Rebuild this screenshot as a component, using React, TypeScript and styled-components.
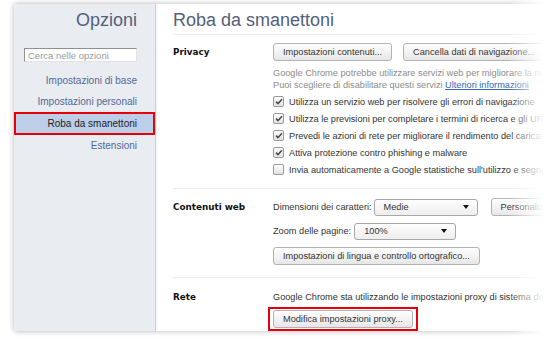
import { FC } from "react";
import styled, { createGlobalStyle } from "styled-components";

const GlobalStyle = createGlobalStyle`
  html, body {
    margin: 0;
    padding: 0;
    background: #fff;
    overflow: hidden;
  }
  body {
    font-family: "Liberation Sans", Arial, sans-serif;
    color: #333;
  }
`;

const Frame = styled.div`
  position: relative;
  width: 550px;
  height: 343px;
  box-sizing: border-box;
  padding: 4px 0 0 14px;
  overflow: hidden;
  background: #fff;

  &::after {
    content: "";
    position: absolute;
    top: 0;
    right: 0;
    bottom: 0;
    width: 42px;
    background: linear-gradient(to right, rgba(255, 255, 255, 0), #fff 85%);
  }
`;

const Window = styled.div`
  display: flex;
  width: 620px;
  height: 327px;
  background: #fff;
  box-shadow: 0 0 6px rgba(0, 0, 0, 0.28);
`;

const Sidebar = styled.nav`
  display: flex;
  flex-direction: column;
  width: 141px;
  flex-shrink: 0;
  padding-top: 6px;
  background: #e9ecf1;
  border-right: 1px solid #cbd0d8;
  box-shadow: 1px 0 2px rgba(0, 0, 0, 0.06);
`;

const PageTitle = styled.h1<{ $side?: boolean }>`
  margin: 0;
  font-size: 18px;
  font-weight: normal;
  line-height: 21px;
  color: #546079;
  text-align: ${({ $side }) => ($side ? "right" : "left")};
  padding: ${({ $side }) => ($side ? "0 18px 0 0" : "0 0 3px 0")};
  border-bottom: ${({ $side }) => ($side ? "none" : "1px solid #eeeeee")};
`;

const Search = styled.input`
  margin: 17px 18px 0 10px;
  height: 14px;
  box-sizing: border-box;
  padding: 0 3px;
  border: 1px solid;
  border-color: #8e8f8f #e2e2e2 #e2e2e2 #8e8f8f;
  background: #fff;
  font-family: inherit;
  font-size: 9.5px;
  outline: none;

  &::placeholder {
    color: #9a9a9a;
  }
`;

const NavList = styled.div`
  display: flex;
  flex-direction: column;
  margin-top: 8px;
`;

const NavItem = styled.a<{ $active?: boolean }>`
  display: block;
  box-sizing: border-box;
  height: ${({ $active }) => ($active ? "23px" : "21px")};
  line-height: ${({ $active }) => ($active ? "19px" : "21px")};
  padding-right: ${({ $active }) => ($active ? "16px" : "18px")};
  text-align: right;
  font-size: 10px;
  text-decoration: none;
  color: ${({ $active }) => ($active ? "#1c1c1c" : "#52699a")};
  background: ${({ $active }) => ($active ? "#bccee8" : "transparent")};
  border: ${({ $active }) => ($active ? "2px solid #e6000c" : "none")};
`;

const Main = styled.main`
  flex: 1;
  display: flex;
  flex-direction: column;
  padding: 6px 0 0 17px;
  font-size: 9.2px;
`;

const Section = styled.section<{ $last?: boolean; $top: number; $bottom: number }>`
  display: grid;
  grid-template-columns: 100px 1fr;
  padding: ${({ $top, $bottom }) => `${$top}px 0 ${$bottom}px`};
  border-bottom: ${({ $last }) => ($last ? "none" : "1px solid #ececec")};
`;

const Label = styled.h3<{ $line?: number }>`
  margin: 0;
  font-family: "DejaVu Sans", Verdana, sans-serif;
  font-weight: bold;
  font-size: 8.8px;
  line-height: ${({ $line }) => $line ?? 18}px;
  color: #111;
`;

const Content = styled.div`
  display: flex;
  flex-direction: column;
  white-space: nowrap;
  min-width: 0;
`;

const Row = styled.div<{ $gap?: number; $mt?: number }>`
  display: flex;
  align-items: center;
  gap: ${({ $gap }) => $gap ?? 0}px;
  margin-top: ${({ $mt }) => $mt ?? 0}px;
  height: 18px;
`;

const Button = styled.button<{ $ml?: number }>`
  height: 18px;
  padding: 0 9px;
  margin-left: ${({ $ml }) => $ml ?? 0}px;
  flex-shrink: 0;
  border: 1px solid #b3b3b3;
  border-radius: 3px;
  background: linear-gradient(#fefefe, #f1f1f1 60%, #e6e6e6);
  font-family: "Liberation Sans", Arial, sans-serif;
  font-size: 9.2px;
  color: #333;
  white-space: nowrap;
`;

const Highlight = styled.span`
  display: inline-flex;
  align-self: flex-start;
  margin: 3px 0 0 -5px;
  padding: 1px 3px 1px 3px;
  border: 2px solid #e6000c;
`;

const Note = styled.div<{ $mt?: number }>`
  line-height: 12px;
  color: #8c8c8c;
  margin-top: ${({ $mt }) => $mt ?? 0}px;
`;

const Link = styled.a`
  color: #3366bb;
  text-decoration: underline;
`;

const Text = styled.span<{ $line?: number }>`
  line-height: ${({ $line }) => $line ?? 18}px;
  color: #333;
`;

const CheckList = styled.div`
  display: flex;
  flex-direction: column;
  margin-top: 2px;
`;

const CheckRow = styled.label`
  display: flex;
  align-items: center;
  gap: 5px;
  height: 17px;
  color: #333;
`;

const Box = styled.span`
  display: inline-flex;
  align-items: center;
  justify-content: center;
  flex-shrink: 0;
  width: 11px;
  height: 11px;
  box-sizing: border-box;
  border: 1px solid #9a9a9a;
  border-radius: 2px;
  background: linear-gradient(#fdfdfd, #e4e4e4);
`;

const Select = styled.div<{ $width: number }>`
  display: flex;
  align-items: center;
  justify-content: space-between;
  box-sizing: border-box;
  width: ${({ $width }) => $width}px;
  height: 17px;
  padding: 0 8px 0 9px;
  flex-shrink: 0;
  border: 1px solid #a8a8a8;
  border-radius: 3px;
  background: linear-gradient(#fefefe, #eeeeee);
  color: #333;
`;

const Caret = styled.span`
  width: 0;
  height: 0;
  border-left: 3.5px solid transparent;
  border-right: 3.5px solid transparent;
  border-top: 4px solid #111;
`;

const Check: FC<{ checked?: boolean; children: string }> = ({ checked, children }) => (
  <CheckRow>
    <Box>
      {checked && (
        <svg width="8" height="7" viewBox="0 0 8 7">
          <path d="M1 3.6 L3 5.6 L7 1.2" fill="none" stroke="#4a4a4a" strokeWidth="1.5" />
        </svg>
      )}
    </Box>
    {children}
  </CheckRow>
);

const App: FC = () => (
  <>
    <GlobalStyle />
    <Frame>
      <Window>
        <Sidebar>
          <PageTitle $side>Opzioni</PageTitle>
          <Search placeholder="Cerca nelle opzioni" />
          <NavList>
            <NavItem>Impostazioni di base</NavItem>
            <NavItem>Impostazioni personali</NavItem>
            <NavItem $active>Roba da smanettoni</NavItem>
            <NavItem>Estensioni</NavItem>
          </NavList>
        </Sidebar>
        <Main>
          <PageTitle>Roba da smanettoni</PageTitle>

          <Section $top={8} $bottom={10}>
            <Label>Privacy</Label>
            <Content>
              <Row $gap={11}>
                <Button>Impostazioni contenuti...</Button>
                <Button>Cancella dati di navigazione...</Button>
              </Row>
              <Note $mt={6}>
                Google Chrome potrebbe utilizzare servizi web per migliorare la navigazione.
              </Note>
              <Note>
                Puoi scegliere di disabilitare questi servizi <Link>Ulteriori informazioni</Link>
              </Note>
              <CheckList>
                <Check checked>Utilizza un servizio web per risolvere gli errori di navigazione</Check>
                <Check checked>
                  Utilizza le previsioni per completare i termini di ricerca e gli URL digitati nella barra degli indirizzi
                </Check>
                <Check checked>
                  Prevedi le azioni di rete per migliorare il rendimento del caricamento delle pagine
                </Check>
                <Check checked>Attiva protezione contro phishing e malware</Check>
                <Check>
                  Invia automaticamente a Google statistiche sull'utilizzo e segnalazioni sugli arresti anomali
                </Check>
              </CheckList>
            </Content>
          </Section>

          <Section $top={9} $bottom={12}>
            <Label>Contenuti web</Label>
            <Content>
              <Row $gap={2}>
                <Text>Dimensioni dei caratteri:</Text>
                <Select $width={104}>
                  Medie
                  <Caret />
                </Select>
                <Button $ml={11}>Personalizza caratteri...</Button>
              </Row>
              <Row $gap={3} $mt={6}>
                <Text>Zoom delle pagine:</Text>
                <Select $width={102}>
                  100%
                  <Caret />
                </Select>
              </Row>
              <Row $mt={7}>
                <Button>Impostazioni di lingua e controllo ortografico...</Button>
              </Row>
            </Content>
          </Section>

          <Section $top={12} $bottom={0} $last>
            <Label $line={14}>Rete</Label>
            <Content>
              <Text $line={14}>
                Google Chrome sta utilizzando le impostazioni proxy di sistema del computer per connettersi alla rete.
              </Text>
              <Highlight>
                <Button>Modifica impostazioni proxy...</Button>
              </Highlight>
            </Content>
          </Section>
        </Main>
      </Window>
    </Frame>
  </>
);

export default App;
